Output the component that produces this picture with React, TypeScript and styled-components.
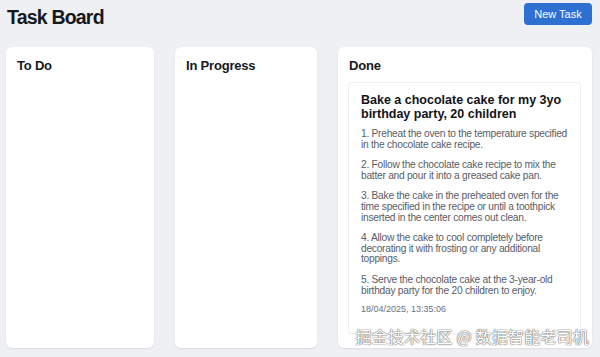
import React from "react";
import styled, { createGlobalStyle } from "styled-components";

const Global = createGlobalStyle`
  html, body { margin: 0; padding: 0; background: #eef0f3; }
  body { font-family: "Liberation Sans", Arial, sans-serif; }
  * { box-sizing: border-box; }
`;

const Page = styled.div`
  position: relative;
  width: 600px;
  height: 357px;
  padding: 3px 8px 0 6px;
  overflow: hidden;
`;

const Header = styled.header`
  display: flex;
  justify-content: space-between;
  align-items: flex-start;
  height: 44px;
`;

const Title = styled.h1`
  margin: 2px 0 0 1px;
  font-size: 19.5px;
  line-height: 24px;
  font-weight: 700;
  color: #16181d;
  letter-spacing: -0.8px;
`;

const PrimaryButton = styled.button`
  height: 22px;
  width: 68px;
  padding: 0;
  border: none;
  border-radius: 4px;
  background: #2e6fd2;
  color: #fff;
  font-family: inherit;
  font-size: 11px;
  cursor: pointer;
`;

const Board = styled.div`
  display: grid;
  grid-template-columns: 148px 142px 1fr;
  column-gap: 21px;
`;

const Column = styled.section`
  height: 301px;
  background: #fff;
  border-radius: 6px;
  box-shadow: 0 1px 2px rgba(0, 0, 0, 0.08);
  padding: 11px 11px 11px 10px;
  display: flex;
  flex-direction: column;
  gap: 9px;
`;

const ColumnTitle = styled.h2`
  margin: 0 0 0 1px;
  font-size: 13px;
  font-weight: 700;
  color: #16181d;
  line-height: 15px;
  letter-spacing: -0.2px;
`;

const Card = styled.article`
  border: 1px solid #eceef1;
  border-radius: 4px;
  padding: 11px 8px 19px 12px;
  box-shadow: 0 1px 2px rgba(0, 0, 0, 0.04);
`;

const CardTitle = styled.h3`
  margin: 0 0 8px;
  font-size: 12.5px;
  font-weight: 700;
  line-height: 13.5px;
  color: #111318;
`;

const Step = styled.p`
  margin: 0 0 10px;
  font-size: 10.2px;
  line-height: 10.6px;
  letter-spacing: -0.25px;
  color: #585d67;
  &:last-of-type {
    margin-bottom: 8px;
  }
`;

const Stamp = styled.div`
  font-size: 9px;
  line-height: 10px;
  color: #6b7079;
`;

const Watermark = styled.div`
  position: absolute;
  right: 11px;
  bottom: 11px;
  font-family: "Noto Sans CJK SC", sans-serif;
  font-size: 16px;
  line-height: 20px;
  color: #fff;
  text-shadow: 0 0 1px #666, 0 0 1px #666, 0 0 2px rgba(0,0,0,0.3);
  letter-spacing: 0.2px;
`;

const steps = [
  "1. Preheat the oven to the temperature specified in the chocolate cake recipe.",
  "2. Follow the chocolate cake recipe to mix the batter and pour it into a greased cake pan.",
  "3. Bake the cake in the preheated oven for the time specified in the recipe or until a toothpick inserted in the center comes out clean.",
  "4. Allow the cake to cool completely before decorating it with frosting or any additional toppings.",
  "5. Serve the chocolate cake at the 3-year-old birthday party for the 20 children to enjoy.",
];

export default function App() {
  return (
    <Page>
      <Global />
      <Header>
        <Title>Task Board</Title>
        <PrimaryButton>New Task</PrimaryButton>
      </Header>
      <Board>
        <Column>
          <ColumnTitle>To Do</ColumnTitle>
        </Column>
        <Column>
          <ColumnTitle>In Progress</ColumnTitle>
        </Column>
        <Column>
          <ColumnTitle>Done</ColumnTitle>
          <Card>
            <CardTitle>Bake a chocolate cake for my 3yo birthday party, 20 children</CardTitle>
            {steps.map((s) => (
              <Step key={s}>{s}</Step>
            ))}
            <Stamp>18/04/2025, 13:35:06</Stamp>
          </Card>
        </Column>
      </Board>
      <Watermark>掘金技术社区 @ 数据智能老司机</Watermark>
    </Page>
  );
}
